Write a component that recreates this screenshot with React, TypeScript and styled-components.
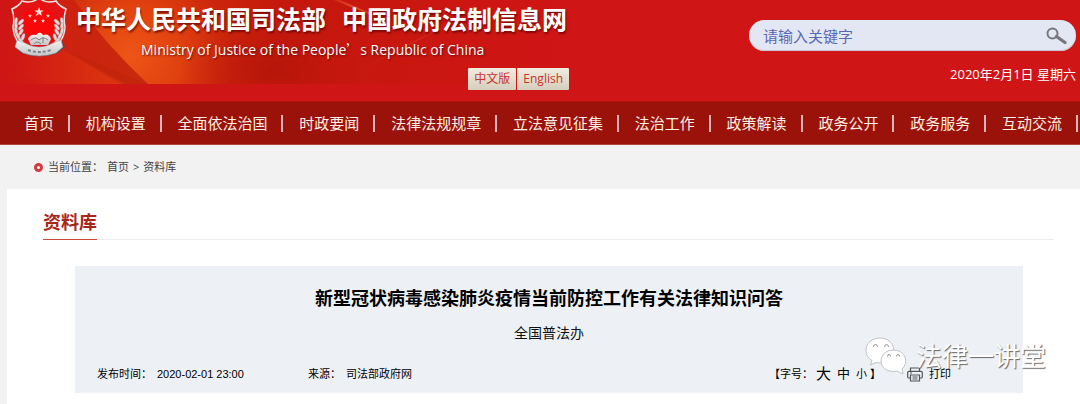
import React from "react";
import styled, { createGlobalStyle } from "styled-components";

const sans = `"Open Sans", "Noto Sans CJK SC", sans-serif`;

const GlobalStyle = createGlobalStyle`
  * { box-sizing: border-box; }
  body { margin: 0; background: #f2f2f2; font-family: ${sans}; overflow-x: hidden; }
  a { color: inherit; text-decoration: none; }
  h1, h2, p, ul, ol { margin: 0; padding: 0; }
  ul, ol { list-style: none; }
  button { font-family: inherit; cursor: pointer; }
`;

const Page = styled.div`
  display: flex;
  flex-direction: column;
  min-height: 100vh;
`;

const Header = styled.header`
  position: relative;
  display: flex;
  justify-content: space-between;
  min-height: 101px;
  background: #cf1515;
`;

const Backdrop = styled.svg`
  position: absolute;
  left: 0;
  top: 0;
`;

const Brand = styled.div`
  position: relative;
  display: flex;
  gap: 8px;
  padding-left: 10px;
`;

const BrandText = styled.div`
  display: flex;
  flex-direction: column;
  color: #fff;
`;

const SiteName = styled.h1`
  display: flex;
  gap: 16px;
  padding: 4px 2px 0 0;
  font-size: 25px;
  line-height: 30px;
  font-weight: 700;
  white-space: nowrap;
  text-shadow: 1px 2px 2px rgba(90, 0, 0, 0.7);
`;

const EnglishName = styled.p`
  padding: 6px 0 0 65px;
  font-size: 14px;
  line-height: 20px;
  white-space: nowrap;
  text-shadow: 1px 1px 2px rgba(90, 0, 0, 0.8);
`;

const WideMark = styled.span`
  font-family: "Noto Sans CJK SC", sans-serif;
  line-height: 1;
`;

const Languages = styled.div`
  display: flex;
  justify-content: flex-end;
  gap: 1px;
  padding-top: 8px;
`;

const LanguageButton = styled.button`
  height: 22px;
  padding: 0 6px;
  border: 0;
  border-radius: 1px;
  background: linear-gradient(#f1ece0, #d5cebd);
  color: #c8332b;
  font-size: 12px;
  line-height: 20px;
`;

const Tools = styled.div`
  position: relative;
  display: flex;
  flex-direction: column;
  align-items: flex-end;
  gap: 14px;
  padding: 20px 4px 0 0;
`;

const SearchForm = styled.form`
  display: flex;
  align-items: center;
  width: 327px;
  height: 31px;
  padding: 0 9px 0 14px;
  border-radius: 16px;
  background: #e3e7f3;
  box-shadow: inset 0 -1px 1px #c9c2d0;
`;

const SearchInput = styled.input`
  flex: 1;
  min-width: 0;
  padding: 0;
  border: 0;
  outline: 0;
  background: transparent;
  color: #5a68b4;
  font: 15px/24px ${sans};
  &::placeholder { color: #5a68b4; opacity: 1; }
`;

const SearchButton = styled.button`
  display: flex;
  padding: 0;
  border: 0;
  background: transparent;
`;

const Today = styled.time`
  color: #fff;
  font-size: 13px;
  line-height: 18px;
`;

const Nav = styled.nav`
  background: #9b120a;
  border-top: 1px solid #ae130d;
  border-bottom: 1px solid #ae4339;
  overflow: hidden;
`;

const NavList = styled.ul`
  display: flex;
  height: 42px;
  align-items: center;
  padding: 0 2px 0 8px;
`;

const NavItem = styled.li`
  display: flex;
  flex: 1 1 auto;
  justify-content: center;
  padding-left: 2px;
  border-right: 2px solid #d9b5bb;
  color: #fbeee4;
  font-size: 15px;
  line-height: 17px;
  white-space: nowrap;
`;

const Breadcrumb = styled.nav`
  display: flex;
  align-items: center;
  gap: 4px;
  height: 44px;
  padding-left: 34px;
  color: #444;
  font-size: 11px;
  line-height: 16px;
`;

const Dot = styled.span`
  width: 9px;
  height: 9px;
  margin-right: 1px;
  border: 3px solid #d43a3e;
  border-radius: 50%;
  background: #fff;
`;

const Panel = styled.main`
  flex: 1;
  margin-left: 7px;
  padding: 20px 26px 11px 36px;
  background: #fff;
`;

const SectionHeading = styled.div`
  display: flex;
  border-bottom: 1px solid #ececec;
`;

const SectionTitle = styled.h2`
  position: relative;
  margin-bottom: -1px;
  padding-bottom: 4px;
  border-bottom: 1px solid #d0453d;
  color: #a9261a;
  font-size: 18px;
  line-height: 26px;
  font-weight: 700;
`;

const Article = styled.article`
  position: relative;
  margin: 26px 31px 0 32px;
  padding: 18px 22px 7px;
  background: #edf1f6;
  color: #111;
  text-align: center;
`;

const ArticleTitle = styled.h1`
  color: #000;
  font-size: 18px;
  line-height: 28px;
  font-weight: 700;
`;

const Author = styled.p`
  padding-top: 9px;
  font-size: 14px;
  line-height: 24px;
`;

const Meta = styled.div`
  display: flex;
  align-items: center;
  height: 24px;
  margin-top: 17px;
  color: #000;
  font: 11px/24px "Liberation Sans", "Noto Sans CJK SC", sans-serif;
  white-space: nowrap;
`;

const MetaEntry = styled.span<{ $width?: number }>`
  display: flex;
  gap: 5px;
  width: ${(p) => (p.$width ? `${p.$width}px` : "auto")};
`;

const SizePicker = styled.div`
  display: flex;
  align-items: center;
  margin: 0 26px 0 auto;
`;

const SizeButton = styled.button<{ $size: number }>`
  padding: 0 3px;
  border: 0;
  background: transparent;
  color: #000;
  font-size: ${(p) => p.$size}px;
  line-height: 24px;
`;

const PrintButton = styled.button`
  display: flex;
  align-items: center;
  gap: 6px;
  margin-right: 50px;
  padding: 0;
  border: 0;
  background: transparent;
  color: #000;
  font-size: 11px;
  line-height: 24px;
`;

const Watermark = styled.div`
  position: absolute;
  right: -23px;
  bottom: 18px;
  display: flex;
  align-items: center;
  gap: 8px;
  color: #fff;
  font-size: 26px;
  line-height: 38px;
  white-space: nowrap;
  pointer-events: none;
  text-shadow: 1px 1px 1px #666;
`;

const starPath = "M0-5 1.2-1.6H4.8L1.9.6 3 4 0 1.9-3 4-1.9.6-4.8-1.6H-1.2Z";

const leaves = [
  [4, 21, 10], [4, 26, 0], [4, 31, -12], [6, 36, -25], [9, 41, -40],
  [9, 22, 45], [9, 27, 40], [9, 32, 30], [11, 37, 20],
];

const Emblem = () => (
  <svg width="58" height="58" viewBox="0 0 58 58" role="img" aria-label="司法部">
    <defs>
      <linearGradient id="silver" x2="0" y2="1">
        <stop stopColor="#f4f2f0" />
        <stop offset="1" stopColor="#c3c5c7" />
      </linearGradient>
    </defs>
    <path d="M7 40Q14 53 29 57Q45 55 52 41L55 47 48 53Q29 60 11 53L5 47Z" fill="#344874" opacity=".65" />
    <path d="M29-2Q22 4 12 1Q9 6 2 9Q5 18 3 27Q4 43 18 49L29 54 40 49Q54 43 55 27Q53 18 56 9Q49 6 46 1Q36 4 29-2Z" fill="#e31315" stroke="#eee1df" strokeWidth="1.5" />
    <path d="M14 12Q20 12 29 5Q38 12 44 12V32Q40 37 29 37Q18 37 14 32Z" fill="#f80808" />
    <g fill="#ffe7de">
      <path d={starPath} transform="translate(29 12)" />
      <path d={starPath} transform="translate(20 16) scale(.43)" />
      <path d={starPath} transform="translate(38 16) scale(.43)" />
      <path d={starPath} transform="translate(25 21) scale(.43)" />
      <path d={starPath} transform="translate(33 21) scale(.43)" />
    </g>
    {[0, 1].map((side) => (
      <g key={side} transform={side ? "translate(58 0) scale(-1 1)" : undefined} fill="#e4dcda" stroke="#a49494" strokeWidth=".4">
        {leaves.map(([x, y, angle]) => (
          <ellipse key={`${x}-${y}`} cx={x + 2} cy={y} rx="1.6" ry="3.6" transform={`rotate(${angle} ${x + 2} ${y})`} />
        ))}
      </g>
    ))}
    <path d="M18 39Q20 34 26 35Q30 30 33 35Q39 33 41 39L38 45H21Z" fill="url(#silver)" />
    <path d="M21 40Q26 36 29 40Q33 36 38 40M24 44Q27 40 31 44M33 37V43" fill="none" stroke="#827f7f" />
    <path d="M7 40L15 43Q29 51 43 43L51 40 53 47 46 53Q29 59 13 53L5 47Z" fill="url(#silver)" stroke="#92969c" strokeWidth=".5" />
    <path d="M18 50Q29 54 41 50" fill="none" stroke="#7d828a" strokeWidth="2" strokeDasharray="3 2" />
  </svg>
);

const HeaderBackdrop = () => (
  <Backdrop width="560" height="84" viewBox="0 0 560 84" aria-hidden="true">
    <defs>
      <linearGradient id="base">
        <stop stopColor="#cf1515" />
        <stop offset=".1" stopColor="#cd2110" />
        <stop offset=".25" stopColor="#c9290d" />
        <stop offset=".5" stopColor="#c4180c" />
        <stop offset="1" stopColor="#cf1515" />
      </linearGradient>
      <radialGradient id="beam" gradientUnits="userSpaceOnUse" cx="130" cy="55" r="170">
        <stop stopColor="#ee5516" />
        <stop offset=".3" stopColor="#e0410f" />
        <stop offset=".6" stopColor="#cc260c" stopOpacity=".8" />
        <stop offset="1" stopColor="#c6190d" stopOpacity="0" />
      </radialGradient>
      <linearGradient id="fold">
        <stop stopColor="#cf1515" />
        <stop offset="1" stopColor="#dc380e" />
      </linearGradient>
      <radialGradient id="shade">
        <stop stopColor="#b01408" stopOpacity=".75" />
        <stop offset="1" stopColor="#bd150b" stopOpacity="0" />
      </radialGradient>
      <linearGradient id="ray">
        <stop stopColor="#f36a3a" stopOpacity="0" />
        <stop offset=".5" stopColor="#f36a3a" stopOpacity=".7" />
        <stop offset="1" stopColor="#f36a3a" stopOpacity="0" />
      </linearGradient>
    </defs>
    <path d="M0 0H560V84H0Z" fill="url(#base)" />
    <path d="M74 0H330V84H148Q105 44 74 0Z" fill="url(#beam)" />
    <path d="M50 42L125 84H42L8 66Z" fill="url(#fold)" />
    <path d="M60 48L148 84H120Z" fill="#b62309" opacity=".35" />
    <ellipse cx="270" cy="70" rx="90" ry="50" fill="url(#shade)" />
    <path d="M330-4L385 19 384 20 326-3Z" fill="url(#ray)" />
    <path d="M350 75L450 22 451 24Z" fill="url(#ray)" opacity=".4" />
  </Backdrop>
);

const Magnifier = () => (
  <svg width="22" height="18" viewBox="0 0 22 18" aria-hidden="true">
    <circle cx="7.5" cy="6.5" r="5" fill="none" stroke="#77767a" strokeWidth="2" />
    <path d="M11.5 9.5L20 15.5" stroke="#77767a" strokeWidth="3.2" strokeLinecap="round" />
  </svg>
);

const Printer = () => (
  <svg width="16" height="15" viewBox="0 0 16 15" fill="none" stroke="#555" strokeWidth="1.2" aria-hidden="true">
    <path d="M3.5 4V1H12.5V4M3.5 11H2Q.7 11 .7 9.7V5.7Q.7 4.3 2 4.3H14Q15.3 4.3 15.3 5.7V9.7Q15.3 11 14 11H12.5M3.5 8H12.5V14H3.5ZM5.5 10H10.5M5.5 12H10.5M3 6H5" />
  </svg>
);

const ChatBubbles = () => (
  <svg width="43" height="38" viewBox="0 0 43 38" aria-hidden="true">
    <g fill="#fff" stroke="#bfc2c5" strokeWidth="1">
      <path d="M15 1C7 1 1 6 1 13.5C1 18 3 21 7 23.5L5.5 28 11 25.5C23 28 30 21 29 13C28 5 22 1 15 1Z" />
      <path d="M28 13C21 13 16 18 16 24C16 31 23 36 32 34L38 37 37 32C44 26 41 13 28 13Z" />
    </g>
    <g fill="none" stroke="#999" strokeWidth="1">
      <path d="M8.5 10Q8.5 7.5 10.5 7.5T12.5 10" />
      <path d="M19.5 10Q19.5 7.5 21.5 7.5T23.5 10" />
      <path d="M22.5 19.5Q22.5 17.5 24 17.5T25.5 19.5" />
      <path d="M31.5 19.5Q31.5 17.5 33 17.5T34.5 19.5" />
    </g>
  </svg>
);

const sections = [
  "首页", "机构设置", "全面依法治国", "时政要闻", "法律法规规章", "立法意见征集",
  "法治工作", "政策解读", "政务公开", "政务服务", "互动交流",
];

export default function App() {
  return (
    <Page>
      <GlobalStyle />
      <Header>
        <HeaderBackdrop />
        <Brand>
          <Emblem />
          <BrandText>
            <SiteName>
              <span>中华人民共和国司法部</span>
              <span>中国政府法制信息网</span>
            </SiteName>
            <EnglishName>
              Ministry of Justice of the People<WideMark lang="zh-CN">’</WideMark>s Republic of China
            </EnglishName>
            <Languages>
              <LanguageButton type="button">中文版</LanguageButton>
              <LanguageButton type="button">English</LanguageButton>
            </Languages>
          </BrandText>
        </Brand>
        <Tools>
          <SearchForm role="search" onSubmit={(e) => e.preventDefault()}>
            <SearchInput type="text" aria-label="请输入关键字" placeholder="请输入关键字" />
            <SearchButton type="submit" aria-label="搜索"><Magnifier /></SearchButton>
          </SearchForm>
          <Today dateTime="2020-02-01">2020年2月1日 星期六</Today>
        </Tools>
      </Header>
      <Nav>
        <NavList>
          {sections.map((name) => (
            <NavItem key={name}><a href="#">{name}</a></NavItem>
          ))}
        </NavList>
      </Nav>
      <Breadcrumb>
        <Dot />
        <span>当前位置：</span>
        <a href="#">首页</a>
        <span>&gt;</span>
        <a href="#">资料库</a>
      </Breadcrumb>
      <Panel>
        <SectionHeading>
          <SectionTitle>资料库</SectionTitle>
        </SectionHeading>
        <Article>
          <ArticleTitle>新型冠状病毒感染肺炎疫情当前防控工作有关法律知识问答</ArticleTitle>
          <Author>全国普法办</Author>
          <Meta>
            <MetaEntry $width={211}><span>发布时间：</span><span>2020-02-01 23:00</span></MetaEntry>
            <MetaEntry><span>来源：</span><span>司法部政府网</span></MetaEntry>
            <SizePicker>
              <span>【字号：</span>
              <SizeButton type="button" $size={15}>大</SizeButton>
              <SizeButton type="button" $size={13}>中</SizeButton>
              <SizeButton type="button" $size={11}>小</SizeButton>
              <span>】</span>
            </SizePicker>
            <PrintButton type="button"><Printer />打印</PrintButton>
          </Meta>
          <Watermark><ChatBubbles />法律一讲堂</Watermark>
        </Article>
      </Panel>
    </Page>
  );
}
